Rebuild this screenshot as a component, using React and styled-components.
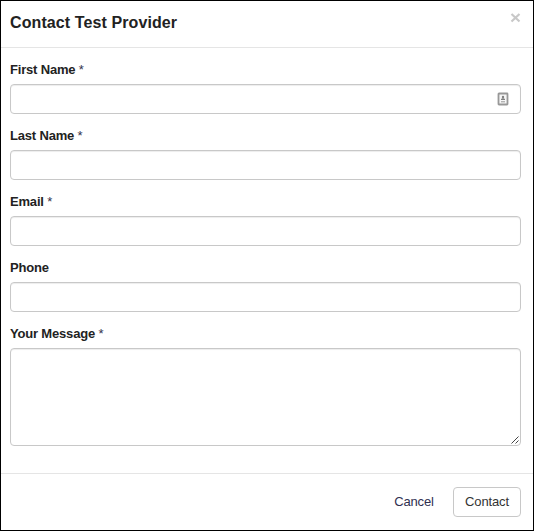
import React from "react";
import styled, { createGlobalStyle } from "styled-components";

const GlobalStyle = createGlobalStyle`
  * {
    box-sizing: border-box;
  }

  body {
    margin: 0;
    background: #fff;
    font-family: "Liberation Sans", Arial, sans-serif;
    font-size: 13px;
    color: #222;
  }
`;

const Modal = styled.div`
  display: flex;
  flex-direction: column;
  width: 534px;
  height: 531px;
  border: 1px solid #000;
  background: #fff;
`;

const Header = styled.header`
  display: flex;
  justify-content: space-between;
  align-items: flex-start;
  height: 47px;
  padding: 11px 12px 0 9px;
  border-bottom: 1px solid #e5e5e5;

  h4 {
    margin: 1px 0 0;
    font-size: 16px;
    font-weight: 700;
    letter-spacing: 0.1px;
    line-height: 20px;
  }
`;

const CloseButton = styled.button`
  display: flex;
  padding: 0;
  border: 0;
  background: none;
  color: #c8c8c8;
`;

const Body = styled.form`
  flex: 1;
  padding: 13px 12px 0 9px;
`;

const Field = styled.div`
  margin-bottom: 13px;

  label {
    display: block;
    height: 17px;
    margin-bottom: 6px;
    font-weight: 700;
    letter-spacing: -0.18px;
    line-height: 17px;
  }

  label span {
    font-weight: 400;
    color: #33334d;
  }
`;

const Control = styled.div`
  display: flex;
  align-items: center;
  height: ${(props) => (props.$multiline ? "98px" : "30px")};
  border: 1px solid #c8c8c8;
  border-radius: 4px;
  box-shadow: inset 0 1px 1px rgba(0, 0, 0, 0.075);

  input,
  textarea {
    flex: 1;
    min-width: 0;
    height: 100%;
    padding: 4px 9px;
    border: 0;
    outline: 0;
    background: transparent;
    font: inherit;
    resize: none;
  }

  svg {
    flex: none;
  }
`;

const ContactIcon = styled.svg`
  margin-right: 11px;
`;

const Grip = styled.svg`
  align-self: flex-end;
`;

const Footer = styled.footer`
  display: flex;
  justify-content: flex-end;
  align-items: flex-start;
  height: 57px;
  padding: 13px 12px 0;
  border-top: 1px solid #e5e5e5;
`;

const Button = styled.button`
  width: ${(props) => (props.$link ? "60px" : "68px")};
  height: 30px;
  margin-left: ${(props) => (props.$link ? "0" : "9px")};
  padding: 0 0 2px;
  border: 1px solid ${(props) => (props.$link ? "transparent" : "#c8c8c8")};
  border-radius: 4px;
  background: #fff;
  color: ${(props) => (props.$link ? "#303050" : "#333")};
  font: inherit;
  letter-spacing: ${(props) => (props.$link ? "-0.2px" : "-0.15px")};
`;

const fields = [
  { name: "firstName", label: "First Name", required: true, autofill: true },
  { name: "lastName", label: "Last Name", required: true },
  { name: "email", label: "Email", required: true },
  { name: "phone", label: "Phone" },
  { name: "message", label: "Your Message", required: true, multiline: true },
];

const App = () => {
  return (
    <>
      <GlobalStyle />
      <Modal>
        <Header>
          <h4>Contact Test Provider</h4>
          <CloseButton type="button" aria-label="Close">
            <svg width="11" height="11" viewBox="0 0 11 11">
              <path
                d="M1.5 2L9.5 9.5M9.5 2L1.5 9.5"
                stroke="currentColor"
                strokeWidth="2.2"
              />
            </svg>
          </CloseButton>
        </Header>

        <Body>
          {fields.map((field) => (
            <Field key={field.name}>
              <label htmlFor={field.name}>
                {field.label} {field.required && <span>*</span>}
              </label>
              <Control $multiline={field.multiline}>
                {field.multiline ? (
                  <textarea id={field.name} />
                ) : (
                  <input id={field.name} type="text" />
                )}
                {field.autofill && (
                  <ContactIcon width="12" height="14" viewBox="0 0 12 14">
                    <rect
                      x="1.5"
                      y="1.5"
                      width="9"
                      height="11"
                      rx="0.5"
                      fill="#f6f6f6"
                      stroke="#989898"
                      strokeWidth="1.8"
                    />
                    <circle cx="6" cy="5" r="1.2" fill="#808080" />
                    <path d="M4 8V7L5.3 6.2H6.7L8 7V8Z" fill="#808080" />
                    <path d="M4 9.8H8" stroke="#989898" />
                  </ContactIcon>
                )}
                {field.multiline && (
                  <Grip width="9" height="9" viewBox="0 0 9 9">
                    <path
                      d="M0.5 7.5L7.5 0.5M4.5 7.5L7.5 4.5"
                      stroke="#444"
                      strokeWidth="1"
                    />
                  </Grip>
                )}
              </Control>
            </Field>
          ))}
        </Body>

        <Footer>
          <Button type="button" $link>
            Cancel
          </Button>
          <Button type="submit">Contact</Button>
        </Footer>
      </Modal>
    </>
  );
};

export default App;
